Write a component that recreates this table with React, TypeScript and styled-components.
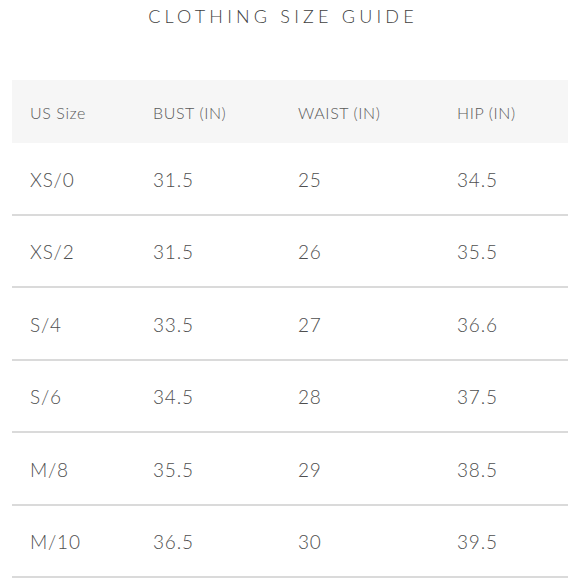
import React from "react";
import styled, { createGlobalStyle } from "styled-components";

const Global = createGlobalStyle`
  html, body { margin: 0; padding: 0; background: #fff; }
  body { font-family: "Lato", "Open Sans", sans-serif; }
`;

const Page = styled.div`
  width: 580px;
  height: 580px;
  overflow: hidden;
  display: flex;
  flex-direction: column;
  align-items: stretch;
`;

const Title = styled.h1`
  margin: 0;
  padding-top: 5px;
  padding-right: 14px;
  height: 80px;
  box-sizing: border-box;
  text-align: center;
  font-weight: 300;
  font-size: 18px;
  line-height: 22px;
  letter-spacing: 4.2px;
  color: #3f3f3f;
`;

const Table = styled.div`
  margin: 0 12px;
  display: flex;
  flex-direction: column;
`;

const Row = styled.div<{ $head?: boolean }>`
  display: grid;
  grid-template-columns: 123px 145px 159px 1fr;
  align-items: center;
  padding-left: 18px;
  box-sizing: border-box;
  height: ${(p) => (p.$head ? "63px" : "72.5px")};
  background: ${(p) => (p.$head ? "#f6f6f6" : "transparent")};
  border-bottom: ${(p) => (p.$head ? "none" : "2px solid #dadada")};
  padding-top: ${(p) => (p.$head ? "1px" : "2px")};
`;

const Cell = styled.div<{ $head?: boolean }>`
  font-weight: 300;
  font-size: ${(p) => (p.$head ? "16px" : "19px")};
  letter-spacing: ${(p) => (p.$head ? "0.6px" : "0.8px")};
  color: ${(p) => (p.$head ? "#5a5a5a" : "#4e4e4e")};
`;

const head = ["US Size", "BUST (IN)", "WAIST (IN)", "HIP (IN)"];
const rows = [
  ["XS/0", "31.5", "25", "34.5"],
  ["XS/2", "31.5", "26", "35.5"],
  ["S/4", "33.5", "27", "36.6"],
  ["S/6", "34.5", "28", "37.5"],
  ["M/8", "35.5", "29", "38.5"],
  ["M/10", "36.5", "30", "39.5"],
];

export default function App() {
  return (
    <Page>
      <Global />
      <Title>CLOTHING SIZE GUIDE</Title>
      <Table>
        <Row $head>
          {head.map((h) => (
            <Cell $head key={h}>{h}</Cell>
          ))}
        </Row>
        {rows.map((r) => (
          <Row key={r[0]}>
            {r.map((c, i) => (
              <Cell key={i}>{c}</Cell>
            ))}
          </Row>
        ))}
      </Table>
    </Page>
  );
}
